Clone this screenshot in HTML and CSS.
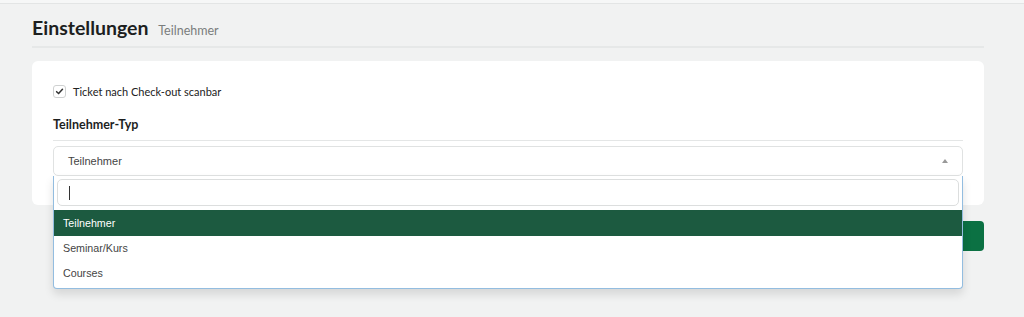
FILE: index.html
```html
<!DOCTYPE html>
<html lang="de">
<head>
<meta charset="utf-8">
<title>Einstellungen</title>
<link rel="stylesheet" href="styles.css">
</head>
<body>
<div class="page">
  <header class="page-header">
    <h1 class="title">Einstellungen <small class="subtitle">Teilnehmer</small></h1>
  </header>
  <div class="card">
    <label class="check-row">
      <span class="checkbox">
        <svg viewBox="0 0 10 10" width="9" height="9"><path d="M1.8 5.2 L4 7.3 L8.3 2.6" fill="none" stroke="#333" stroke-width="1.7" stroke-linecap="round" stroke-linejoin="round"/></svg>
      </span>
      <span class="check-label">Ticket nach Check-out scanbar</span>
    </label>
    <h2 class="field-title">Teilnehmer-Typ</h2>
    <div class="select-wrap">
      <div class="select">
        <span class="select-value">Teilnehmer</span>
        <span class="select-arrow"></span>
      </div>
      <div class="dropdown">
        <div class="search"><span class="caret"></span></div>
        <ul class="options">
          <li class="option active">Teilnehmer</li>
          <li class="option">Seminar/Kurs</li>
          <li class="option">Courses</li>
        </ul>
      </div>
    </div>
  </div>
  <div class="actions">
    <button class="btn-save">Speichern</button>
  </div>
</div>
</body>
</html>
```
FILE: styles.css
```css
html, body {
  margin: 0;
  padding: 0;
}
html {
  background: #f1f2f2;
}
body {
  min-height: 314px;
  background: #f1f2f2;
  border-top: 3px solid #f6f7f7;
  font-family: Lato, "Open Sans", sans-serif;
  color: #222;
}
.page {
  border-top: 1px solid #e3e5e5;
  padding: 0 40px 70px 32px;
}
.page-header {
  height: 42px;
  border-bottom: 2px solid #e6e8e8;
  display: flex;
  align-items: flex-end;
}
.title {
  margin: 0 0 3px;
  font-size: 19.5px;
  line-height: 24px;
  font-weight: 700;
  color: #1d1f1f;
}
.subtitle {
  font-size: 12.5px;
  font-weight: 400;
  color: #7a7d7d;
  margin-left: 5px;
}
.card {
  margin-top: 13px;
  background: #fff;
  border-radius: 6px;
  padding: 24px 21px 29px 21px;
}
.check-row {
  display: flex;
  align-items: center;
  gap: 7px;
}
.checkbox {
  width: 11px;
  height: 11px;
  border: 1px solid #cfd1d1;
  border-radius: 3px;
  display: flex;
  align-items: center;
  justify-content: center;
  background: #fff;
}
.check-label {
  font-size: 11px;
  color: #222;
}
.field-title {
  margin: 19px 0 0;
  font-size: 12.5px;
  font-weight: 700;
  color: #1d1f1f;
  padding-bottom: 8px;
  border-bottom: 1px solid #e4e6e6;
}
.select-wrap {
  position: relative;
  margin-top: 5px;
}
.select {
  height: 28px;
  border: 1px solid #e0e2e2;
  border-radius: 5px;
  display: flex;
  align-items: center;
  padding: 0 14px;
  font-family: "Liberation Sans", Arial, sans-serif;
  font-size: 11px;
  color: #444;
}
.select-value {
  flex: 1;
}
.select-arrow {
  width: 0;
  height: 0;
  border-left: 3px solid transparent;
  border-right: 3px solid transparent;
  border-bottom: 4px solid #999;
}
.dropdown {
  position: absolute;
  left: 0;
  right: 0;
  top: 30px;
  background: #fff;
  border: 1px solid #93bde0;
  border-top: none;
  border-radius: 0 0 4px 4px;
  box-shadow: 0 5px 10px rgba(0,0,0,0.12);
  font-family: "Liberation Sans", Arial, sans-serif;
  font-size: 10.7px;
  color: #444;
  z-index: 2;
}
.search {
  margin: 3px 3px 0;
  height: 25px;
  border: 1px solid #dcdede;
  border-radius: 5px;
  display: flex;
  align-items: center;
  padding-left: 11px;
}
.caret {
  width: 1px;
  height: 14px;
  background: #333;
}
.options {
  list-style: none;
  margin: 4px 0 2px;
  padding: 0;
}
.option {
  height: 25px;
  line-height: 24px;
  padding: 0 9px;
}
.option.active {
  background: #1c5a40;
  color: #fff;
  height: 26px;
  line-height: 26px;
}
.actions {
  display: flex;
  justify-content: flex-end;
  margin-top: 16px;
}
.btn-save {
  height: 30px;
  padding: 0 22px;
  border: none;
  border-radius: 4px;
  background: #0b7143;
  color: #fff;
  font-family: Lato, sans-serif;
  font-size: 12px;
  font-weight: 700;
}
```
